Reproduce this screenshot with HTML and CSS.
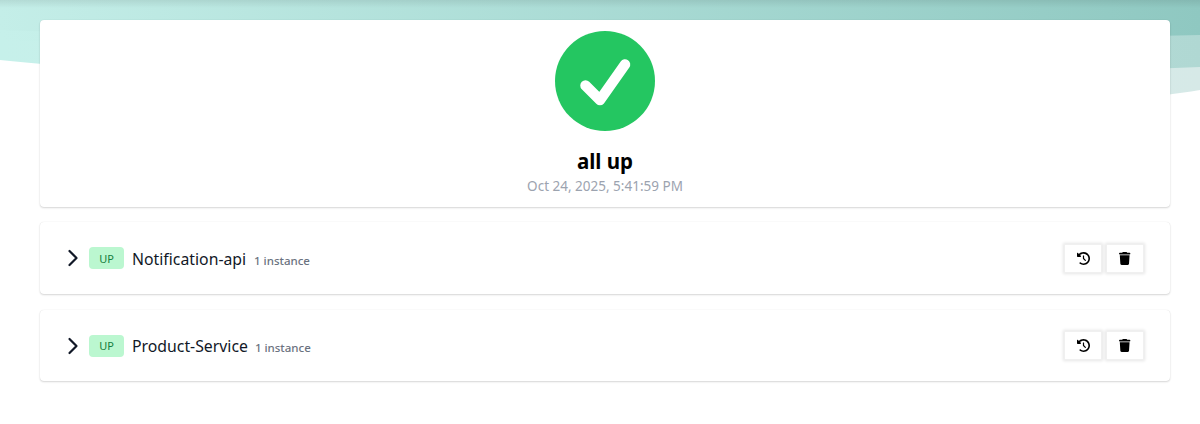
FILE: index.html
```html
<!DOCTYPE html>
<html lang="en">
<head>
    <meta charset="UTF-8">
    <meta name="viewport" content="width=device-width, initial-scale=1.0">
    <title>Applications</title>
    <link rel="stylesheet" href="styles.css">
</head>
<body>
    <svg class="wave" viewBox="0 0 1200 100" preserveAspectRatio="none">
        <defs>
            <linearGradient id="waveLight" x1="0" y1="0" x2="1" y2="0">
                <stop offset="0" stop-color="#c6f0ea"/>
                <stop offset="1" stop-color="#d6e9e7"/>
            </linearGradient>
            <linearGradient id="waveMid" x1="0" y1="0" x2="1" y2="0">
                <stop offset="0" stop-color="#c6f0ea"/>
                <stop offset="1" stop-color="#b0d8d3"/>
            </linearGradient>
            <linearGradient id="waveDark" x1="0" y1="0" x2="1" y2="0">
                <stop offset="0" stop-color="#c4eee8"/>
                <stop offset="1" stop-color="#8fc8c1"/>
            </linearGradient>
            <linearGradient id="waveShade" x1="0" y1="0" x2="0" y2="1">
                <stop offset="0" stop-color="#000" stop-opacity=".08"/>
                <stop offset="1" stop-color="#000" stop-opacity="0"/>
            </linearGradient>
        </defs>
        <path d="M0 60C200 80 600 105 1000 105C1090 105 1150 98 1200 90V0H0Z" fill="url(#waveLight)"/>
        <path d="M0 40C300 50 800 85 1200 67V0H0Z" fill="url(#waveMid)"/>
        <path d="M0 30C300 40 800 45 1200 35V0H0Z" fill="url(#waveDark)"/>
        <rect width="1200" height="8" fill="url(#waveShade)"/>
    </svg>

    <main class="page">
        <section class="card status">
            <svg class="status-icon" viewBox="0 0 100 100">
                <circle cx="50" cy="50" r="50" fill="#24c661"/>
                <path d="M30.500 54.500L45 69L70 33.500" fill="none" stroke="#fff" stroke-width="10.500" stroke-linecap="round" stroke-linejoin="round"/>
            </svg>
            <h1 class="status-title">all up</h1>
            <p class="status-time">Oct 24, 2025, 5:41:59 PM</p>
        </section>

        <section class="card app">
            <svg class="chevron" viewBox="0 0 12 18">
                <path d="M2.5 2L9.500 9L2.500 16" fill="none" stroke="#111827" stroke-width="2.200" stroke-linecap="round" stroke-linejoin="round"/>
            </svg>
            <span class="badge">UP</span>
            <span class="app-name">Notification-api</span>
            <span class="app-count">1 instance</span>
            <div class="actions">
                <button class="action">
                    <svg viewBox="0 0 512 512"><path d="M75 75L41 41C25.900 25.900 0 36.600 0 57.900V168c0 13.300 10.700 24 24 24H134.100c21.400 0 32.100-25.900 17-41l-30.800-30.800C155 85.500 203 64 256 64c106 0 192 86 192 192s-86 192-192 192c-40.800 0-78.600-12.700-109.700-34.400c-14.500-10.100-34.400-6.600-44.600 7.900s-6.600 34.400 7.900 44.600C151.200 495 201.700 512 256 512c141.400 0 256-114.600 256-256S397.400 0 256 0C185.300 0 121.300 28.700 75 75zm181 53c-13.300 0-24 10.700-24 24V256c0 6.400 2.500 12.500 7 17l72 72c9.400 9.400 24.600 9.400 33.900 0s9.400-24.600 0-33.900l-65-65V152c0-13.300-10.700-24-24-24z"/></svg>
                </button>
                <button class="action">
                    <svg viewBox="0 0 448 512"><path d="M135.200 17.700L128 32H32C14.300 32 0 46.300 0 64S14.300 96 32 96H416c17.700 0 32-14.300 32-32s-14.300-32-32-32H320l-7.200-14.300C307.400 6.800 296.300 0 284.200 0H163.800c-12.100 0-23.200 6.800-28.600 17.700zM416 128H32L53.200 467c1.600 25.300 22.600 45 47.900 45H346.900c25.300 0 46.300-19.700 47.900-45L416 128z"/></svg>
                </button>
            </div>
        </section>

        <section class="card app">
            <svg class="chevron" viewBox="0 0 12 18">
                <path d="M2.5 2L9.500 9L2.500 16" fill="none" stroke="#111827" stroke-width="2.200" stroke-linecap="round" stroke-linejoin="round"/>
            </svg>
            <span class="badge">UP</span>
            <span class="app-name">Product-Service</span>
            <span class="app-count">1 instance</span>
            <div class="actions">
                <button class="action">
                    <svg viewBox="0 0 512 512"><path d="M75 75L41 41C25.900 25.900 0 36.600 0 57.900V168c0 13.300 10.700 24 24 24H134.100c21.400 0 32.100-25.900 17-41l-30.800-30.800C155 85.500 203 64 256 64c106 0 192 86 192 192s-86 192-192 192c-40.800 0-78.600-12.700-109.700-34.400c-14.500-10.100-34.400-6.600-44.600 7.900s-6.600 34.400 7.900 44.600C151.200 495 201.700 512 256 512c141.400 0 256-114.600 256-256S397.400 0 256 0C185.300 0 121.300 28.700 75 75zm181 53c-13.300 0-24 10.700-24 24V256c0 6.400 2.500 12.500 7 17l72 72c9.400 9.400 24.600 9.400 33.900 0s9.400-24.600 0-33.900l-65-65V152c0-13.300-10.700-24-24-24z"/></svg>
                </button>
                <button class="action">
                    <svg viewBox="0 0 448 512"><path d="M135.200 17.700L128 32H32C14.300 32 0 46.300 0 64S14.300 96 32 96H416c17.700 0 32-14.300 32-32s-14.300-32-32-32H320l-7.200-14.300C307.400 6.800 296.300 0 284.200 0H163.800c-12.100 0-23.200 6.800-28.600 17.700zM416 128H32L53.200 467c1.600 25.300 22.600 45 47.900 45H346.900c25.300 0 46.300-19.700 47.900-45L416 128z"/></svg>
                </button>
            </div>
        </section>
    </main>
</body>
</html>
```

FILE: styles.css
```css
*{
    margin: 0;
    padding: 0;
    box-sizing: border-box;
    font-family: "Noto Sans", sans-serif;
}

body{
    background: #fff;
}

.wave{
    position: absolute;
    top: 0;
    left: 0;
    width: 100%;
    height: 100px;
}

.page{
    position: relative;
    display: flex;
    flex-direction: column;
    gap: 15px;
    padding: 20px 30px 30px 40px;
}

.card{
    background: #fff;
    border-radius: 4px;
    box-shadow: 0 1px 2px rgba(10, 10, 10, .16), 0 0 1px rgba(10, 10, 10, .12);
}

.status{
    display: flex;
    flex-direction: column;
    align-items: center;
    height: 187px;
    padding-top: 11px;
}

.status-icon{
    width: 100px;
    height: 100px;
}

.status-title{
    margin-top: 15px;
    font-size: 20.500px;
    line-height: 30px;
    font-weight: 700;
    color: #000;
}

.status-time{
    font-size: 13.500px;
    line-height: 20px;
    color: #9ca3af;
}

.app{
    display: flex;
    align-items: center;
    height: 72px;
    padding: 0 26px 0 27px;
}

.app:last-child{
    margin-top: 1px;
    height: 71px;
}

.chevron{
    width: 12px;
    height: 18px;
    margin-right: 10px;
}

.badge{
    display: flex;
    align-items: center;
    justify-content: center;
    width: 35px;
    height: 22px;
    margin-right: 8px;
    background: #bbf7d0;
    border-radius: 4px;
    font-size: 11px;
    color: #15803d;
}

.app-name{
    min-width: 115px;
    margin-top: 1px;
    font-size: 15.800px;
    color: #111827;
}

.app-count{
    margin: 4px 0 0 7px;
    font-size: 11.500px;
    font-weight: 500;
    color: #6b7280;
}

.actions{
    display: flex;
    gap: 4px;
    margin-left: auto;
}

.action{
    display: flex;
    align-items: center;
    justify-content: center;
    width: 38px;
    height: 29px;
    border: 1px solid #f0f0f0;
    background: #fff;
    box-shadow: 0 0 3px 1px rgba(10, 10, 10, .1);
}

.action svg{
    height: 13px;
    fill: #000;
}
```
